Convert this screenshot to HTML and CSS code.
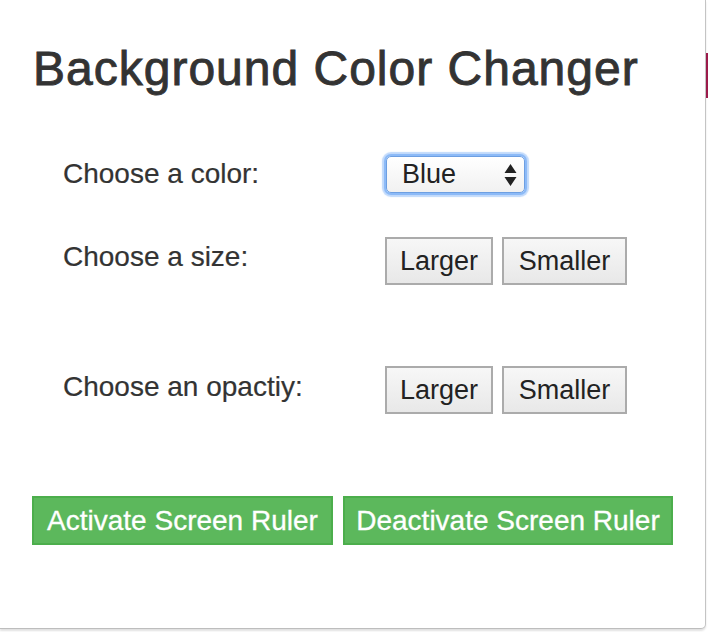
FILE: index.html
```html
<!DOCTYPE html>
<html>
<head>
<meta charset="utf-8">
<link rel="stylesheet" href="styles.css">
</head>
<body>
<div class="popup">
  <h1 class="title">Background Color Changer</h1>
  <div class="form">
    <div class="label row1">Choose a color:</div>
    <div class="control row1">
      <div class="select">
        <span>Blue</span>
        <svg class="arrows" width="13" height="24" viewBox="0 0 13 24"><path d="M6.5 1 L12.5 10 L0.5 10 Z M6.5 23 L12.5 14 L0.5 14 Z" fill="#222"/></svg>
      </div>
    </div>
    <div class="label row2">Choose a size:</div>
    <div class="control row2">
      <button class="btn larger">Larger</button>
      <button class="btn smaller">Smaller</button>
    </div>
    <div class="label row3">Choose an opactiy:</div>
    <div class="control row3">
      <button class="btn larger">Larger</button>
      <button class="btn smaller">Smaller</button>
    </div>
  </div>
  <div class="actions">
    <button class="green activate">Activate Screen Ruler</button>
    <button class="green deactivate">Deactivate Screen Ruler</button>
  </div>
</div>
<div class="edge-mark"></div>
</body>
</html>
```
FILE: styles.css
```css
html, body {
  margin: 0;
  padding: 0;
}
body {
  width: 708px;
  height: 632px;
  background: #ffffff;
  font-family: "Liberation Sans", Arial, sans-serif;
  color: #333333;
  position: relative;
  overflow: hidden;
}
.popup {
  width: 706px;
  height: 629px;
  box-sizing: border-box;
  border-right: 1px solid #c4c4c4;
  border-bottom: 1px solid #bdbdbd;
  border-bottom-right-radius: 5px;
  box-shadow: 0 2px 2px rgba(0,0,0,0.12);
  background: #fff;
  padding: 40px 0 0 33px;
}
.title {
  margin: 0;
  font-size: 48px;
  font-weight: 400;
  letter-spacing: 1px;
  -webkit-text-stroke: 0.9px #333;
  line-height: 58px;
  color: #333;
}
.form {
  margin-top: 55px;
  margin-left: 30px;
  display: grid;
  grid-template-columns: 322px auto;
  grid-template-rows: 84px 129px 48px;
  font-size: 28px;
}
.label {
  line-height: 32px;
  -webkit-text-stroke: 0.2px #333;
}
.label.row1 { padding-top: 5px; }
.label.row2 { padding-top: 4px; }
.label.row3 { padding-top: 5px; }
.control { display: flex; gap: 9px; align-items: flex-start; }
.select {
  width: 139px;
  height: 37px;
  box-sizing: border-box;
  border: 1px solid #6d9fe2;
  border-radius: 5px;
  background: linear-gradient(#ffffff, #f1f1f1);
  box-shadow: 0 0 0 2px #8cbaf7, 0 0 1px 4px rgba(140, 186, 247, 0.55);
  margin-left: 1px;
  margin-top: 3px;
  display: flex;
  align-items: center;
  justify-content: space-between;
  padding: 0 7px 0 15px;
  font-size: 27px;
  color: #222;
}
.arrows { display: block; }
.btn {
  font-family: "Liberation Sans", Arial, sans-serif;
  font-size: 27px;
  color: #222;
  height: 48px;
  padding: 0;
  border: 2px solid #ababab;
  background: linear-gradient(#f7f7f7, #e8e8e8);
  margin: 0;
  border-radius: 0;
}
.btn.larger { width: 108px; }
.btn.smaller { width: 125px; }
.actions {
  margin-top: 82px;
  margin-left: -1px;
  display: flex;
  gap: 10px;
}
.green {
  font-family: "Liberation Sans", Arial, sans-serif;
  font-size: 28px;
  color: #fff;
  -webkit-text-stroke: 0.3px #fff;
  background: #5cb85c;
  border: 2px solid #4cae4c;
  height: 49px;
  padding: 0;
  margin: 0;
  border-radius: 0;
}
.green.activate { width: 301px; }
.green.deactivate { width: 330px; }
.edge-mark {
  position: absolute;
  left: 706px;
  top: 53px;
  width: 2px;
  height: 45px;
  background: #9b1a4a;
}
```
